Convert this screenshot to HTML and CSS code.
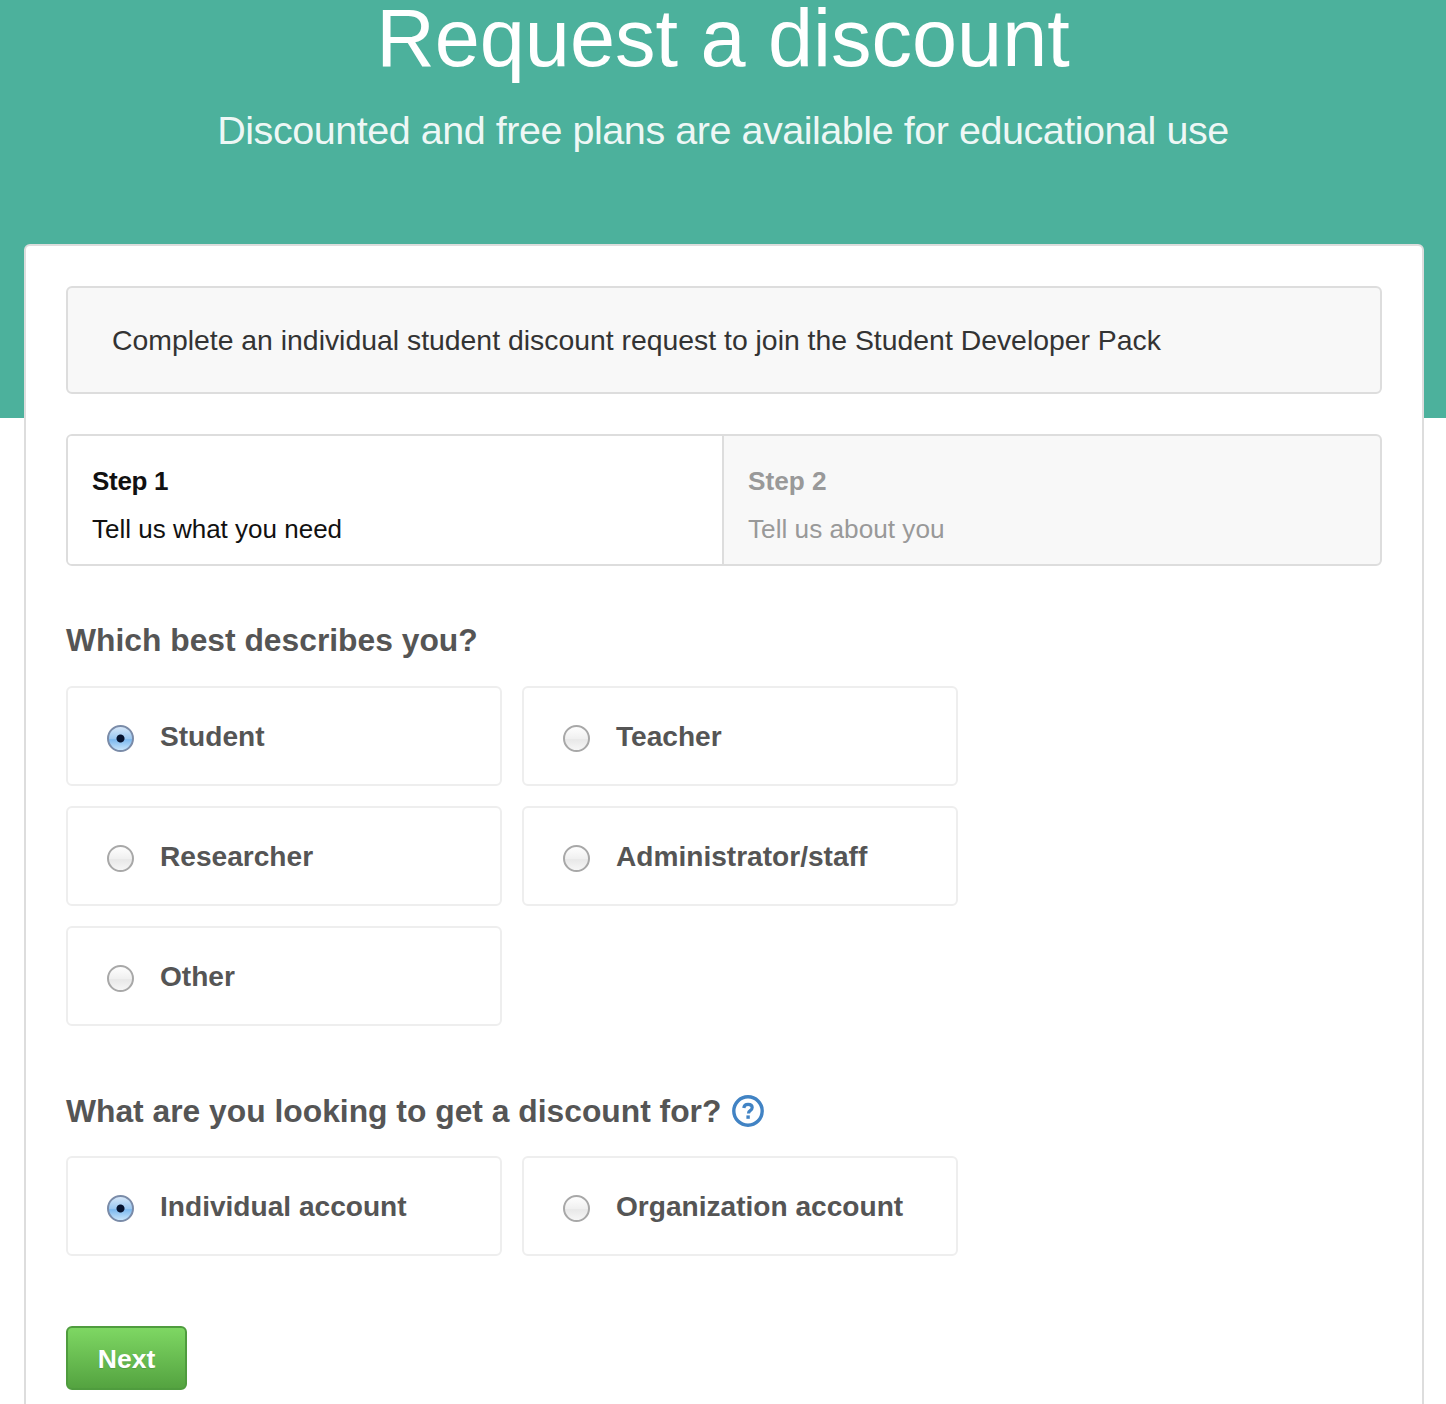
FILE: index.html
```html
<!DOCTYPE html>
<html lang="en">
<head>
<meta charset="utf-8">
<title>Request a discount</title>
<link rel="stylesheet" href="styles.css">
</head>
<body>
<header class="hero">
  <h1 class="hero-title">Request a discount</h1>
  <p class="hero-sub">Discounted and free plans are available for educational use</p>
</header>
<main class="card">
  <div class="notice">Complete an individual student discount request to join the Student Developer Pack</div>
  <ol class="steps">
    <li class="step step-active"><strong class="step-name">Step 1</strong><span class="step-desc">Tell us what you need</span></li>
    <li class="step"><strong class="step-name">Step 2</strong><span class="step-desc">Tell us about you</span></li>
  </ol>
  <form>
    <h2 class="question">Which best describes you?</h2>
    <div class="options">
      <label class="option"><input class="radio" type="radio" name="role" checked><span class="option-text">Student</span></label>
      <label class="option"><input class="radio" type="radio" name="role"><span class="option-text">Teacher</span></label>
      <label class="option"><input class="radio" type="radio" name="role"><span class="option-text">Researcher</span></label>
      <label class="option"><input class="radio" type="radio" name="role"><span class="option-text">Administrator/staff</span></label>
      <label class="option"><input class="radio" type="radio" name="role"><span class="option-text">Other</span></label>
    </div>
    <h2 class="question question-second">What are you looking to get a discount for?
      <svg class="help" viewBox="0 0 32 32" width="32" height="32" aria-hidden="true"><circle cx="16" cy="16" r="14.2" fill="none" stroke="#4183c4" stroke-width="3.4"/><path d="M11.800 13c.2-2.400 1.800-3.700 4.300-3.700 2.500 0 4.100 1.300 4.100 3.300 0 1.500-.8 2.300-2 3.100-1.200.8-1.700 1.400-1.700 2.800" fill="none" stroke="#4183c4" stroke-width="3.200"/><rect x="14.400" y="20.400" width="3.400" height="3.400" fill="#4183c4"/></svg>
    </h2>
    <div class="options options-second">
      <label class="option"><input class="radio" type="radio" name="account" checked><span class="option-text">Individual account</span></label>
      <label class="option"><input class="radio" type="radio" name="account"><span class="option-text">Organization account</span></label>
    </div>
    <button class="next" type="button">Next</button>
  </form>
</main>
</body>
</html>
```
FILE: styles.css
```css
* { box-sizing: border-box; }
html, body { margin: 0; height: 1404px; overflow: hidden; background: #fff; }
body { font-family: "Liberation Sans", Arial, sans-serif; color: #555; }
.hero { height: 418px; background: #4cb19c; color: #fff; text-align: center; }
.hero-title { margin: 0; font-family: "Liberation Sans", Arial, sans-serif; font-weight: 400; font-size: 81px; line-height: 76px; }
.hero-sub { margin: 23px 0 0; font-family: "Liberation Sans", Arial, sans-serif; font-weight: 400; font-size: 39.5px; line-height: 62px; letter-spacing: -.46px; color: rgba(255,255,255,.92); }
.card { position: relative; margin: -174px 22px 0 24px; padding: 40px 40px 40px; background: #fff; border: 2px solid #ddd; border-radius: 6px; height: 1300px; }
.notice { height: 108px; padding: 0 44px; display: flex; align-items: center; background: #f8f8f8; border: 2px solid #ddd; border-radius: 6px; color: #333; font-size: 28.38px; margin-bottom: 40px; }
.steps { list-style: none; margin: 0 0 54px; padding: 0; display: flex; height: 132px; border: 2px solid #ddd; border-radius: 6px; background: #f8f8f8; overflow: hidden; }
.step { flex: 1; padding: 29px 24px 0; color: #999; font-size: 26.2px; }
.step-active { flex: none; width: 656px; background: #fff; color: #111; font-size: 26px; border-right: 2px solid #ddd; }
.step-name { display: block; line-height: 32px; font-weight: 700; }
.step-active .step-name { letter-spacing: -.3px; }
.step-desc { display: block; line-height: 32px; margin-top: 16px; }
.question { margin: 0; font-size: 31.8px; line-height: 40px; font-weight: 700; color: #555; display: flex; align-items: center; gap: 11px; }
.question-second { margin-top: 65px; }
.options { display: grid; grid-template-columns: 436px 436px; gap: 20px; margin-top: 26px; }
.options-second { margin-top: 25px; }
.option { height: 100px; display: flex; align-items: center; padding: 0 0 0 39px; border: 2px solid #eee; border-radius: 6px; font-size: 28.1px; font-weight: 700; color: #555; }
.option-text { padding-top: 2px; }
.radio { appearance: none; -webkit-appearance: none; flex: none; width: 27px; height: 27px; margin: 4px 26px 0 0; border-radius: 50%; border: 2px solid #a8a8a8; background: linear-gradient(#fefefe 0, #f0f0f0 50%, #e8e8e8 55%, #f6f6f6 100%); }
.radio:checked { border-color: #7a8ba8; background: radial-gradient(circle at center, #06122e 0, #06122e 3.5px, transparent 4.5px), linear-gradient(#d5e7f9 0, #9cc8f1 50%, #7cb8ee 55%, #c6e4fb 100%); }
.next { display: block; margin-top: 70px; width: 121px; height: 64px; padding: 2px 0 0; border: 2px solid #4f9c3e; border-radius: 6px; background: linear-gradient(#7ed763, #54a340); color: #fff; font: 700 26.5px "Liberation Sans", Arial, sans-serif; text-shadow: 0 1px 1px rgba(0,0,0,.15); }
```
